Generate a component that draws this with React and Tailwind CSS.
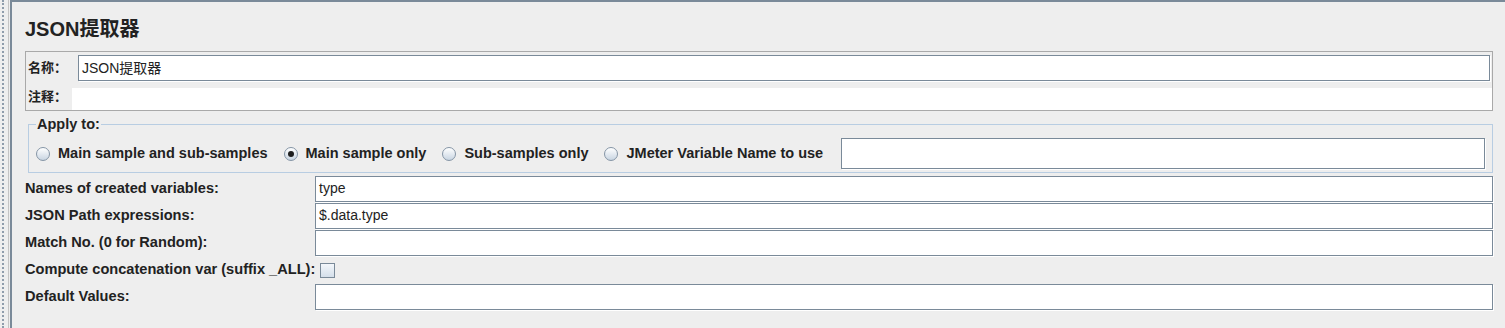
import React from 'react';

const font = { fontFamily: '"Liberation Sans", Arial, "Noto Sans CJK SC", sans-serif' };

const Field = ({ value, className = '' }) => (
  <div
    className={`flex h-[26px] items-center border border-[#7a8a99] bg-white pl-[3px] text-[14px] text-[#222] shadow-[1px_1px_0_#ffffff] ${className}`}
  >
    {value}
  </div>
);

const Radio = ({ checked, label }) => (
  <label className="flex items-center gap-[8px]">
    <span className="flex h-[14px] w-[14px] items-center justify-center rounded-full border border-[#8595a6] bg-gradient-to-b from-white to-[#c9d5e2]">
      {checked && <span className="h-[6px] w-[6px] rounded-full bg-[#1e1e1e]" />}
    </span>
    <span className="text-[14.5px] font-bold text-[#222]">{label}</span>
  </label>
);

const Row = ({ label, children }) => (
  <div className="flex h-[27px] items-center">
    <div className="w-[290px] shrink-0 text-[14.6px] font-bold text-[#222]">{label}</div>
    <div className="flex-1">{children}</div>
  </div>
);

const App = () => {
  return (
    <div style={font} className="flex h-[328px] w-[1505px] overflow-hidden bg-[#eeeeee]">
      <div className="w-[8px] shrink-0 pl-[2px]">
        <div className="h-full border-l-2 border-dotted border-[#8e9cab]" />
      </div>
      <div className="w-[1px] shrink-0 bg-[#c4c4c4]" />
      <div className="w-[1px] shrink-0 bg-[#eeeeee]" />
      <div className="flex-1 border-l-2 border-t-2 border-[#7a8a99] pl-[13px] pr-[12px]">
        <div className="pt-[15px] text-[20px] font-bold leading-[24px] text-[#222]">JSON提取器</div>

        <div className="mt-[10px] border border-[#a9a9a9]">
          <div className="flex h-[32px] items-center pr-[2px]">
            <span className="w-[52px] pl-[2px] text-[13px] font-bold text-[#222]">名称：</span>
            <Field value="JSON提取器" className="flex-1" />
          </div>
          <div className="flex h-[26px] items-center">
            <span className="w-[46px] pl-[2px] text-[13px] font-bold text-[#222]">注释：</span>
            <div className="h-[22px] flex-1 self-end bg-white" />
          </div>
        </div>

        <fieldset className="ml-[3px] mt-[5px] border border-[#b8cde2] px-[7px] pb-[3px]">
          <legend className="px-[1px] text-[14.5px] font-bold leading-[16px] text-[#222]">Apply to:</legend>
          <div className="flex items-center pt-[6px]">
            <div className="flex items-center gap-[16px]">
              <Radio label="Main sample and sub-samples" />
              <Radio checked label="Main sample only" />
              <Radio label="Sub-samples only" />
              <Radio label="JMeter Variable Name to use" />
            </div>
            <div className="ml-[18px] h-[31px] flex-1 border border-[#7a8a99] bg-white shadow-[1px_1px_0_#ffffff]" />
          </div>
        </fieldset>

        <div className="mt-[2px] flex flex-col">
          <Row label="Names of created variables:"><Field value="type" /></Row>
          <Row label="JSON Path expressions:"><Field value="$.data.type" /></Row>
          <Row label="Match No. (0 for Random):"><Field value="" /></Row>
          <div className="flex h-[27px] items-center">
            <span className="text-[14.6px] font-bold text-[#222]">Compute concatenation var (suffix _ALL):</span>
            <span className="ml-[5px] mt-[2px] h-[15px] w-[15px] border border-[#7a8a99] bg-gradient-to-b from-[#f4f7fb] to-[#d4dfea]" />
          </div>
          <Row label="Default Values:"><Field value="" /></Row>
        </div>
      </div>
    </div>
  );
};

export default App;
